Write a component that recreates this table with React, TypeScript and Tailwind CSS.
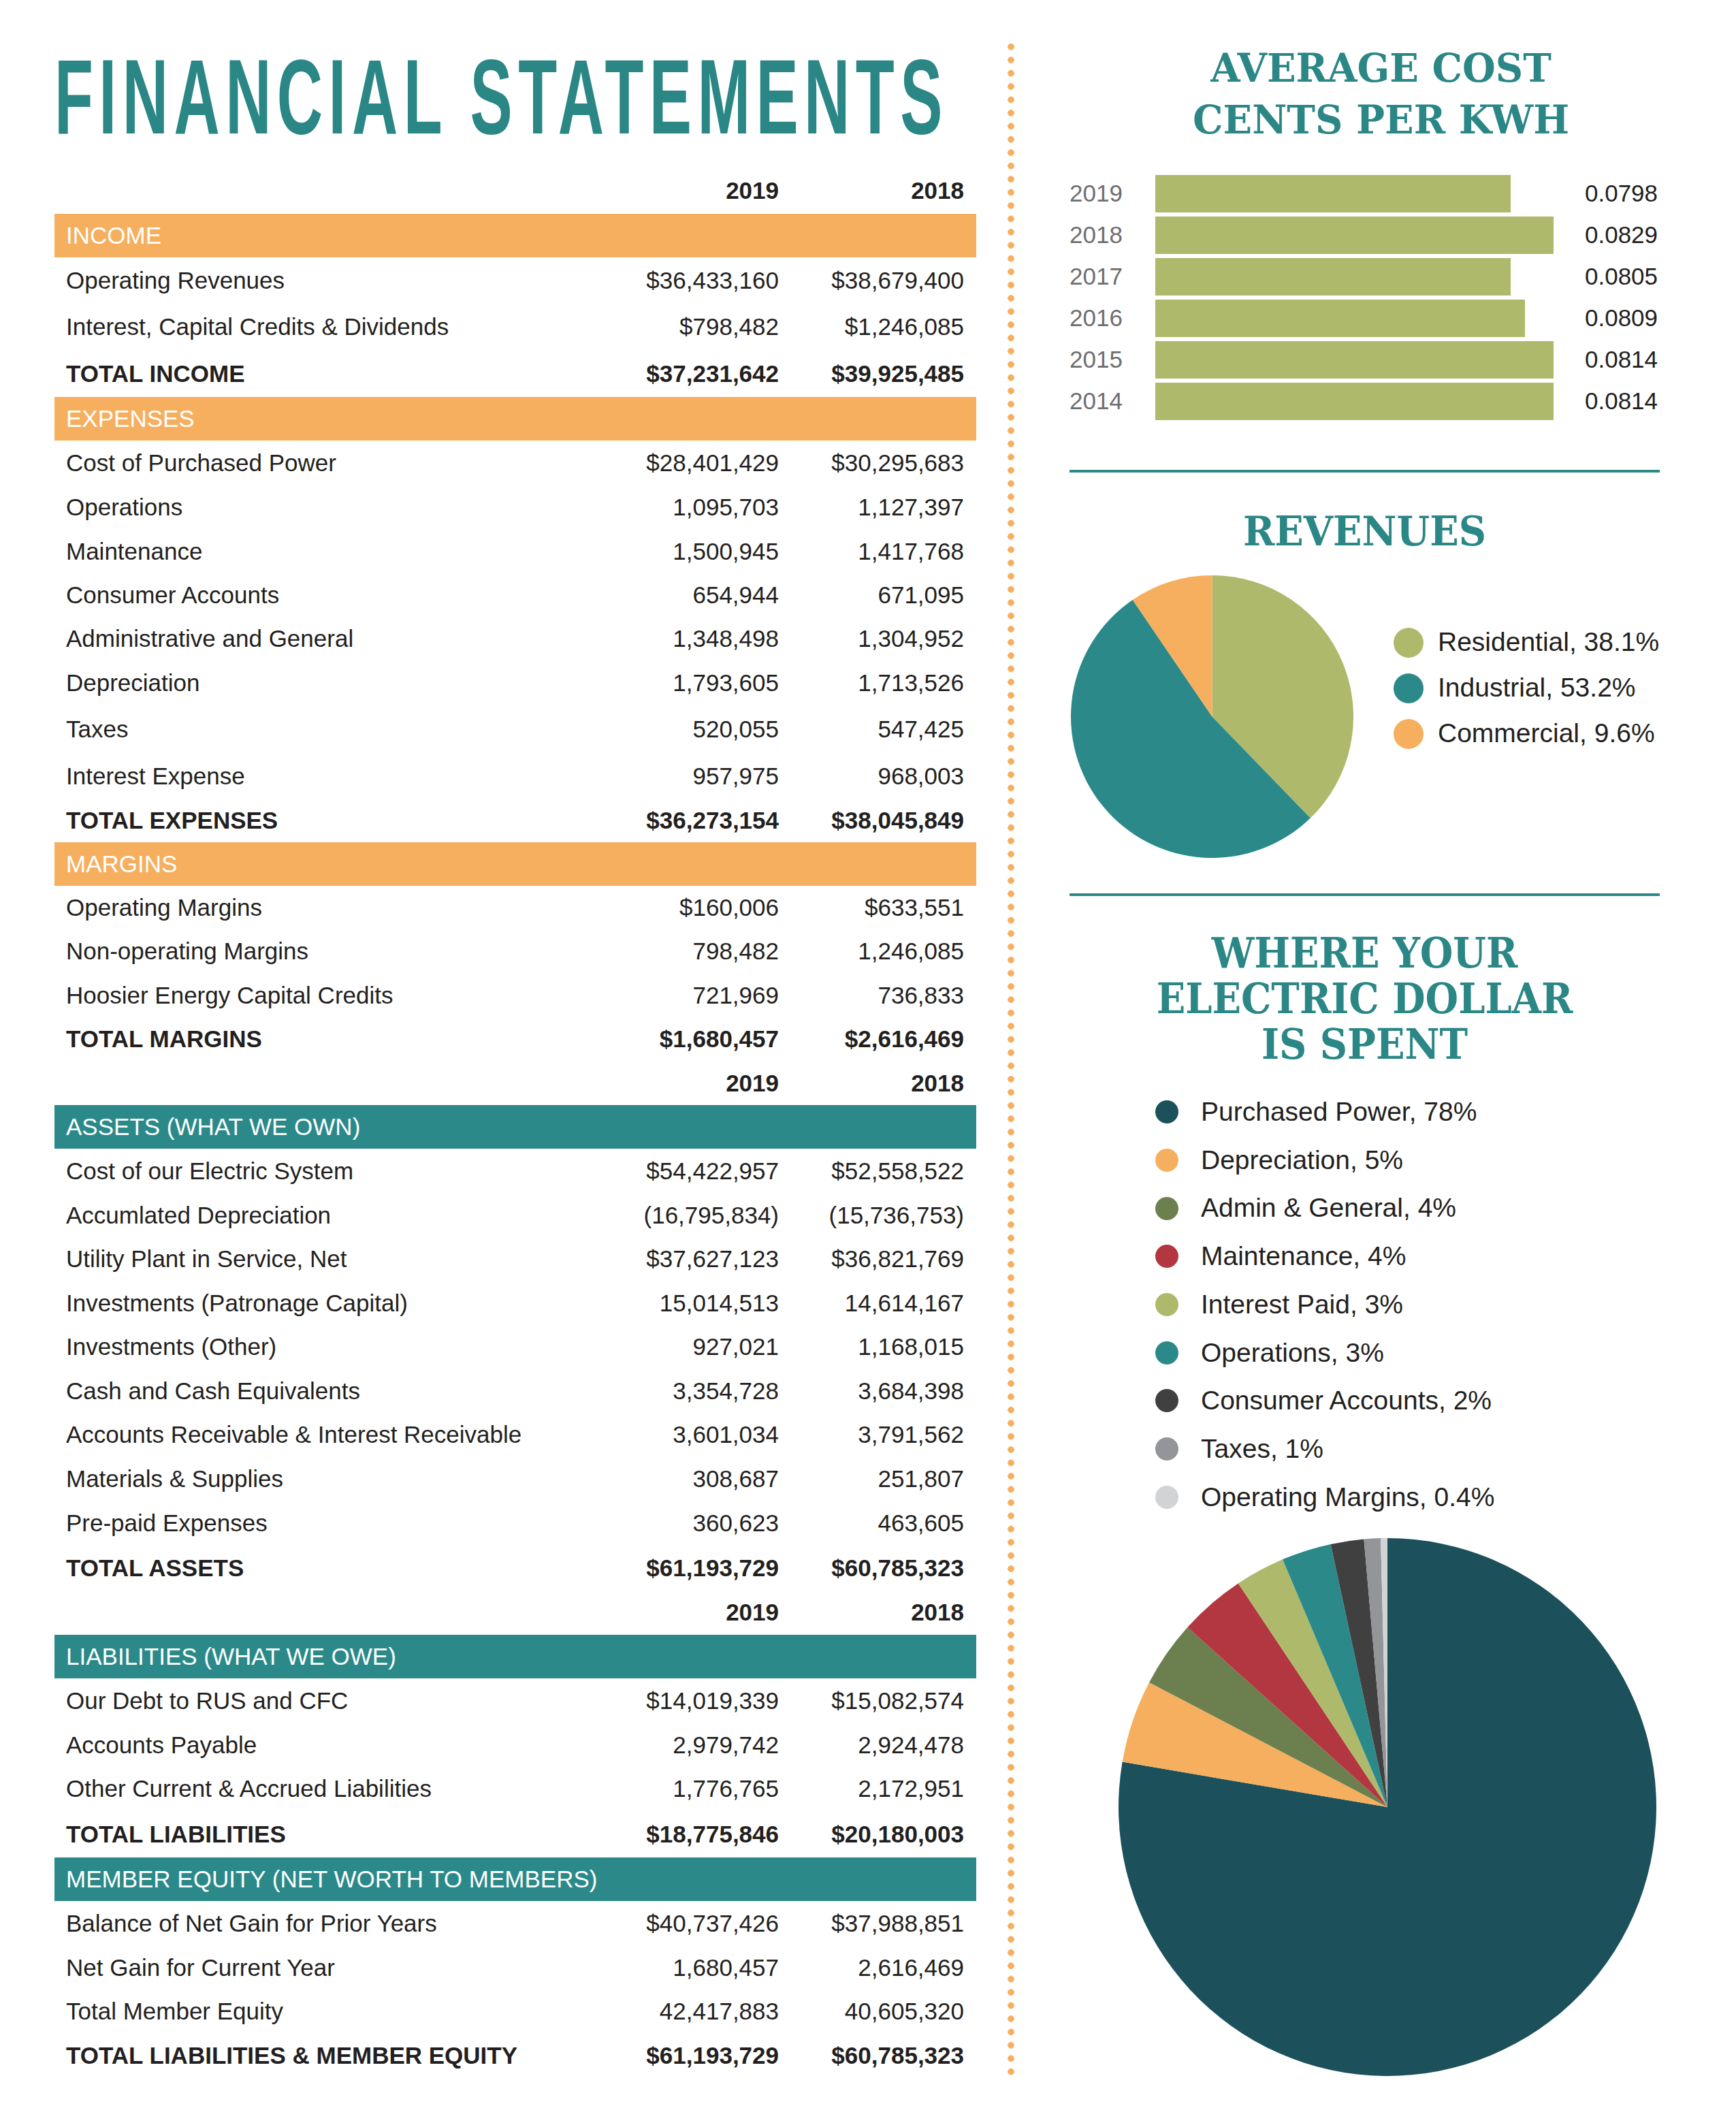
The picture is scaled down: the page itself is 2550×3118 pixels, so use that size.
import React from "react";

type Row =
  | { kind: "years"; h: number }
  | { kind: "bar"; label: string; tone: "orange" | "teal" }
  | { kind: "row"; label: string; a: string; b: string; h: number; bold?: boolean };

const rows: Row[] = [
  { kind: "years", h: 68 },
  { kind: "bar", label: "INCOME", tone: "orange" },
  { kind: "row", label: "Operating Revenues", a: "$36,433,160", b: "$38,679,400", h: 68 },
  { kind: "row", label: "Interest, Capital Credits & Dividends", a: "$798,482", b: "$1,246,085", h: 69 },
  { kind: "row", label: "TOTAL INCOME", a: "$37,231,642", b: "$39,925,485", h: 68, bold: true },
  { kind: "bar", label: "EXPENSES", tone: "orange" },
  { kind: "row", label: "Cost of Purchased Power", a: "$28,401,429", b: "$30,295,683", h: 66 },
  { kind: "row", label: "Operations", a: "1,095,703", b: "1,127,397", h: 65 },
  { kind: "row", label: "Maintenance", a: "1,500,945", b: "1,417,768", h: 64 },
  { kind: "row", label: "Consumer Accounts", a: "654,944", b: "671,095", h: 64 },
  { kind: "row", label: "Administrative and General", a: "1,348,498", b: "1,304,952", h: 65 },
  { kind: "row", label: "Depreciation", a: "1,793,605", b: "1,713,526", h: 64 },
  { kind: "row", label: "Taxes", a: "520,055", b: "547,425", h: 72 },
  { kind: "row", label: "Interest Expense", a: "957,975", b: "968,003", h: 66 },
  { kind: "row", label: "TOTAL EXPENSES", a: "$36,273,154", b: "$38,045,849", h: 64, bold: true },
  { kind: "bar", label: "MARGINS", tone: "orange" },
  { kind: "row", label: "Operating Margins", a: "$160,006", b: "$633,551", h: 64 },
  { kind: "row", label: "Non-operating Margins", a: "798,482", b: "1,246,085", h: 65 },
  { kind: "row", label: "Hoosier Energy Capital Credits", a: "721,969", b: "736,833", h: 64 },
  { kind: "row", label: "TOTAL MARGINS", a: "$1,680,457", b: "$2,616,469", h: 65, bold: true },
  { kind: "years", h: 64 },
  { kind: "bar", label: "ASSETS (WHAT WE OWN)", tone: "teal" },
  { kind: "row", label: "Cost of our Electric System", a: "$54,422,957", b: "$52,558,522", h: 66 },
  { kind: "row", label: "Accumlated Depreciation", a: "(16,795,834)", b: "(15,736,753)", h: 64 },
  { kind: "row", label: "Utility Plant in Service, Net", a: "$37,627,123", b: "$36,821,769", h: 65 },
  { kind: "row", label: "Investments (Patronage Capital)", a: "15,014,513", b: "14,614,167", h: 64 },
  { kind: "row", label: "Investments (Other)", a: "927,021", b: "1,168,015", h: 65 },
  { kind: "row", label: "Cash and Cash Equivalents", a: "3,354,728", b: "3,684,398", h: 64 },
  { kind: "row", label: "Accounts Receivable & Interest Receivable", a: "3,601,034", b: "3,791,562", h: 65 },
  { kind: "row", label: "Materials & Supplies", a: "308,687", b: "251,807", h: 64 },
  { kind: "row", label: "Pre-paid Expenses", a: "360,623", b: "463,605", h: 66 },
  { kind: "row", label: "TOTAL ASSETS", a: "$61,193,729", b: "$60,785,323", h: 66, bold: true },
  { kind: "years", h: 65 },
  { kind: "bar", label: "LIABILITIES (WHAT WE OWE)", tone: "teal" },
  { kind: "row", label: "Our Debt to RUS and CFC", a: "$14,019,339", b: "$15,082,574", h: 66 },
  { kind: "row", label: "Accounts Payable", a: "2,979,742", b: "2,924,478", h: 64 },
  { kind: "row", label: "Other Current & Accrued Liabilities", a: "1,776,765", b: "2,172,951", h: 65 },
  { kind: "row", label: "TOTAL LIABILITIES", a: "$18,775,846", b: "$20,180,003", h: 68, bold: true },
  { kind: "bar", label: "MEMBER EQUITY (NET WORTH TO MEMBERS)", tone: "teal" },
  { kind: "row", label: "Balance of Net Gain for Prior Years", a: "$40,737,426", b: "$37,988,851", h: 66 },
  { kind: "row", label: "Net Gain for Current Year", a: "1,680,457", b: "2,616,469", h: 64 },
  { kind: "row", label: "Total Member Equity", a: "42,417,883", b: "40,605,320", h: 65 },
  { kind: "row", label: "TOTAL LIABILITIES & MEMBER EQUITY", a: "$61,193,729", b: "$60,785,323", h: 65, bold: true },
];

const costs = [
  { year: "2019", value: "0.0798", w: 522 },
  { year: "2018", value: "0.0829", w: 585 },
  { year: "2017", value: "0.0805", w: 522 },
  { year: "2016", value: "0.0809", w: 543 },
  { year: "2015", value: "0.0814", w: 585 },
  { year: "2014", value: "0.0814", w: 585 },
];

const revenues = [
  { label: "Residential, 38.1%", value: 38.1, color: "#AEB96B" },
  { label: "Industrial, 53.2%", value: 53.2, color: "#2B8A89" },
  { label: "Commercial, 9.6%", value: 9.6, color: "#F6AF5F" },
];

const spending = [
  { label: "Purchased Power, 78%", value: 78, color: "#1C515B" },
  { label: "Depreciation, 5%", value: 5, color: "#F6AF5F" },
  { label: "Admin & General, 4%", value: 4, color: "#6C7F4E" },
  { label: "Maintenance, 4%", value: 4, color: "#B23741" },
  { label: "Interest Paid, 3%", value: 3, color: "#AEB96B" },
  { label: "Operations, 3%", value: 3, color: "#2B8A89" },
  { label: "Consumer Accounts, 2%", value: 2, color: "#404041" },
  { label: "Taxes, 1%", value: 1, color: "#939598" },
  { label: "Operating Margins, 0.4%", value: 0.4, color: "#D1D3D4" },
];

type Slice = { value: number; color: string };

// angles are degrees clockwise from 12 o'clock
function slicePath(r: number, a0: number, a1: number) {
  const rad = (d: number) => (d * Math.PI) / 180;
  const x0 = r + r * Math.sin(rad(a0));
  const y0 = r - r * Math.cos(rad(a0));
  const x1 = r + r * Math.sin(rad(a1));
  const y1 = r - r * Math.cos(rad(a1));
  const large = a1 - a0 > 180 ? 1 : 0;
  return `M${r},${r} L${x0},${y0} A${r},${r} 0 ${large} 1 ${x1},${y1} Z`;
}

function Pie({ data, size }: { data: Slice[]; size: number }) {
  const total = data.reduce((s, d) => s + d.value, 0);
  const r = size / 2;
  let start = 0;
  return (
    <svg width={size} height={size} viewBox={`0 0 ${size} ${size}`}>
      {data.map((d, i) => {
        const end = start + (d.value / total) * 360;
        const path = slicePath(r, start, end);
        start = end;
        return <path key={i} d={path} fill={d.color} />;
      })}
    </svg>
  );
}

function TableRow({ row }: { row: Row }) {
  if (row.kind === "years") {
    return (
      <div className="flex items-center pr-[18px] font-bold" style={{ height: row.h }}>
        <div className="flex-1" />
        <div className="w-[300px] text-right">2019</div>
        <div className="w-[272px] text-right">2018</div>
      </div>
    );
  }
  if (row.kind === "bar") {
    return (
      <div
        className={
          row.tone === "orange"
            ? "h-[64px] flex items-center pl-[17px] bg-[#F6AF5F] text-white"
            : "h-[64px] flex items-center pl-[17px] bg-[#2B8A89] text-white"
        }
      >
        {row.label}
      </div>
    );
  }
  return (
    <div
      className={row.bold ? "flex items-center pl-[17px] pr-[18px] font-bold" : "flex items-center pl-[17px] pr-[18px]"}
      style={{ height: row.h }}
    >
      <div className="flex-1">{row.label}</div>
      <div className="w-[300px] text-right">{row.a}</div>
      <div className="w-[272px] text-right">{row.b}</div>
    </div>
  );
}

export default function App() {
  return (
    <div className="w-[2550px] h-[3118px] bg-white flex pl-[80px] font-['Liberation_Sans',Arial,sans-serif] text-[#231F20]">
      {/* left: statements table */}
      <div className="w-[1354px] flex flex-col text-[35px] leading-normal">
        <div className="pt-[64px] h-[246px]">
          <h1 className="inline-block origin-left scale-x-[0.598] text-[156px] leading-none font-bold tracking-[14px] text-[#2B8786] whitespace-nowrap">
            FINANCIAL STATEMENTS
          </h1>
        </div>
        {rows.map((row, i) => (
          <TableRow key={i} row={row} />
        ))}
      </div>

      {/* dotted divider */}
      <div className="ml-[46px] mt-[59px] w-[10px] h-[2997px] bg-[radial-gradient(circle,#F6AF5F_4.5px,transparent_5px)] bg-[length:10px_19.45px] bg-repeat-y" />

      {/* right: charts */}
      <div className="ml-[81px] w-[867px] flex flex-col pt-[62px]">
        <h2 className="ml-[48px] scale-x-[0.965] text-center font-['DejaVu_Serif',serif] font-bold text-[58px] leading-[76px] text-[#2B8786]">
          AVERAGE COST
          <br />
          CENTS PER KWH
        </h2>

        <div className="mt-[43px] flex flex-col gap-[6px] text-[35px]">
          {costs.map((c) => (
            <div key={c.year} className="h-[55px] flex items-center">
              <div className="w-[126px] text-[#6D6E71]">{c.year}</div>
              <div className="w-[631px] h-full">
                <div className="h-full bg-[#AEB96B]" style={{ width: c.w }} />
              </div>
              <div>{c.value}</div>
            </div>
          ))}
        </div>

        <div className="mt-[73px] h-[4px] bg-[#2B8A89]" />

        <h2 className="mt-[53px] scale-x-[0.93] text-center font-['DejaVu_Serif',serif] font-bold text-[60px] leading-[67px] text-[#2B8786]">
          REVENUES
        </h2>

        <div className="mt-[31px] flex items-start">
          <div className="ml-[2px]">
            <Pie data={revenues} size={415} />
          </div>
          <div className="ml-[59px] mt-[65px] flex flex-col text-[39px]">
            {revenues.map((r) => (
              <div key={r.label} className="h-[67px] flex items-center gap-[21px]">
                <span className="w-[44px] h-[44px] rounded-full shrink-0" style={{ background: r.color }} />
                <span className="whitespace-nowrap">{r.label}</span>
              </div>
            ))}
          </div>
        </div>

        <div className="mt-[52px] h-[4px] bg-[#2B8A89]" />

        <h2 className="mt-[50px] scale-x-[0.9] text-center font-['DejaVu_Serif',serif] font-bold text-[62px] leading-[67px] text-[#2B8786]">
          WHERE YOUR
          <br />
          ELECTRIC DOLLAR
          <br />
          IS SPENT
        </h2>

        <div className="mt-[31px] pl-[126px] flex flex-col text-[39px]">
          {spending.map((s) => (
            <div key={s.label} className="h-[70.7px] flex items-center gap-[33px]">
              <span className="w-[34px] h-[34px] rounded-full shrink-0" style={{ background: s.color }} />
              <span className="whitespace-nowrap">{s.label}</span>
            </div>
          ))}
        </div>

        <div className="mt-[25px] ml-[72px]">
          <Pie data={spending} size={790} />
        </div>
      </div>
    </div>
  );
}
